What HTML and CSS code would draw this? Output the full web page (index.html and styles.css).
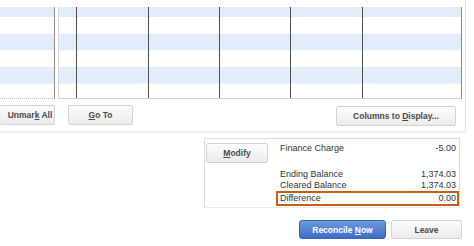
FILE: index.html
```html
<!DOCTYPE html>
<html lang="en">
<head>
    <meta charset="UTF-8">
    <meta name="viewport" content="width=device-width, initial-scale=1.0">
    <title>Reconcile</title>
    <link rel="stylesheet" href="styles.css">
</head>
<body>
    <div class="register">
        <div class="grid-area">
            <div class="panel side-panel"></div>
            <div class="panel main-panel">
                <div class="col"></div>
                <div class="col"></div>
                <div class="col"></div>
                <div class="col"></div>
                <div class="col"></div>
                <div class="col last"></div>
            </div>
        </div>

        <div class="button-row">
            <button class="btn unmark">Unmar<u>k</u> All</button>
            <button class="btn goto"><u>G</u>o To</button>
            <button class="btn columns">Columns to <u>D</u>isplay...</button>
        </div>
    </div>

    <div class="summary-wrap">
        <div class="summary">
            <button class="btn modify"><u>M</u>odify</button>
            <div class="balances">
                <div class="line finance">
                    <span>Finance Charge</span>
                    <span>-5.00</span>
                </div>
                <div class="line ending">
                    <span>Ending Balance</span>
                    <span>1,374.03</span>
                </div>
                <div class="line">
                    <span>Cleared Balance</span>
                    <span>1,374.03</span>
                </div>
                <div class="line difference">
                    <span>Difference</span>
                    <span>0.00</span>
                </div>
            </div>
        </div>
    </div>

    <div class="actions">
        <button class="btn primary reconcile">Reconcile <u>N</u>ow</button>
        <button class="btn leave">Leave</button>
    </div>
</body>
</html>
```

FILE: styles.css
```css
body {
    margin: 0;
    width: 474px;
    height: 246px;
    overflow: hidden;
    background: #fff;
    font-family: 'Liberation Sans', Arial, sans-serif;
    font-size: 9px;
    color: #333;
}

.register {
    width: 465px;
    border-right: 1px solid #dedede;
    border-bottom: 2px solid #efefef;
}

.grid-area {
    display: flex;
    gap: 3px;
    padding-top: 7px;
    height: 92px;
}

.panel {
    box-sizing: border-box;
    height: 92px;
    border-bottom: 1px solid #cfcfcf;
    background-image: linear-gradient(#e2edfc 0 50%, #fff 50% 100%);
    background-size: 100% 33.33px;
    background-position: 0 -6.67px;
}

.side-panel {
    width: 55px;
    border-right: 1px solid #8c8c8c;
    border-bottom-style: dotted;
    border-bottom-color: #b5b5b5;
}

.main-panel {
    width: 404px;
    border-left: 1px solid #d6d6d6;
    border-right: 1px solid #8a8a8a;
    display: grid;
    grid-template-columns: 18px 72px 71px 71px 72px 1fr;
}

.col {
    border-right: 1px solid #4e4e4e;
}

.col.last {
    border-right: none;
}

.button-row {
    display: flex;
    gap: 13px;
    padding: 6px 0 6px 0;
    height: 20px;
}

.btn {
    box-sizing: border-box;
    height: 20px;
    padding: 0;
    background: linear-gradient(#fdfdfd, #ebebeb);
    border: 1px solid #d3d3d3;
    border-radius: 2px;
    font-family: 'Liberation Sans', Arial, sans-serif;
    font-size: 8.5px;
    font-weight: bold;
    color: #4a4a4a;
    cursor: pointer;
}

.btn u {
    text-underline-offset: 1px;
}

.unmark {
    width: 55px;
    padding-left: 6px;
    border-left: none;
}

.goto {
    width: 65px;
}

.columns {
    width: 120px;
    margin-left: auto;
    margin-right: 9px;
    margin-top: 1px;
}

.summary-wrap {
    display: flex;
    justify-content: flex-end;
    padding: 5px 14px 0 0;
}

.summary {
    box-sizing: border-box;
    width: 256px;
    display: flex;
    align-items: flex-start;
    padding: 4px 0 1px 1px;
    border: 1px solid #dcdcdc;
    border-bottom-color: #ececec;
}

.modify {
    width: 62px;
}

.balances {
    flex: 1;
    margin-left: 8px;
}

.line {
    display: flex;
    justify-content: space-between;
    line-height: 11px;
    padding: 0 3px 0 4px;
    color: #333;
}

.line.ending {
    margin-top: 15px;
}

.line.difference {
    border: 2px solid #c95f16;
    padding: 0 1px 0 2px;
}

.actions {
    display: flex;
    justify-content: flex-end;
    gap: 5px;
    padding: 12px 12px 0 0;
}

.actions .btn {
    height: 19px;
}

.reconcile {
    width: 87px;
}

.leave {
    width: 71px;
}

.btn.primary {
    background: linear-gradient(#6e9ae0, #3d6cc6);
    border-color: #3a64b4;
    border-radius: 3px;
    color: #fff;
}
```
